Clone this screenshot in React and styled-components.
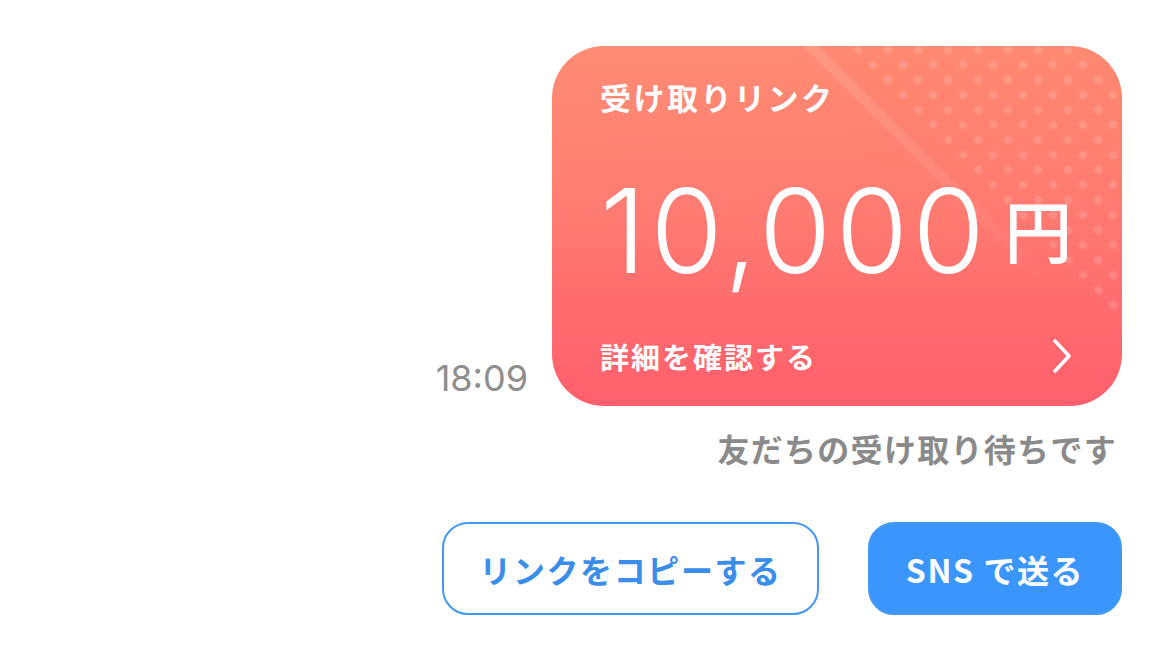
import React from 'react';
import styled, { createGlobalStyle } from 'styled-components';

const GlobalStyle = createGlobalStyle`
  html, body {
    margin: 0;
    padding: 0;
    background: #ffffff;
  }
  body {
    font-family: "Noto Sans CJK JP", "Noto Sans", sans-serif;
  }
`;

const Page = styled.div`
  display: flex;
  flex-direction: column;
  align-items: flex-end;
  padding: 46px 48px 0 0;
`;

const MessageRow = styled.div`
  display: flex;
  align-items: flex-end;
  gap: 24px;
`;

const Time = styled.span`
  font-family: Inter, "Noto Sans", sans-serif;
  font-size: 36px;
  line-height: 1;
  color: #8e8e8e;
  margin-bottom: 10px;
`;

const Card = styled.div`
  position: relative;
  overflow: hidden;
  width: 570px;
  height: 360px;
  box-sizing: border-box;
  padding: 30px 48px 0 48px;
  border-radius: 52px;
  background: linear-gradient(180deg, #ff8970 0%, #ff7a70 45%, #ff5f6d 100%);
  color: #ffffff;
  display: flex;
  flex-direction: column;
`;

const Decoration = styled.svg`
  position: absolute;
  inset: 0;
  pointer-events: none;
`;

const CardTitle = styled.div`
  position: relative;
  font-size: 31px;
  font-weight: 700;
  line-height: 42px;
  letter-spacing: 2.5px;
`;

const Amount = styled.div`
  position: relative;
  display: flex;
  align-items: flex-end;
  margin-top: 54px;
  height: 117px;
`;

const Digits = styled.span`
  font-family: Inter, "Noto Sans", sans-serif;
  font-weight: 300;
  font-size: 117px;
  line-height: 1;
  letter-spacing: 4.5px;
`;

const Yen = styled.span`
  font-size: 68px;
  font-weight: 500;
  line-height: 1;
  margin-left: 15px;
  margin-bottom: 26px;
`;

const DetailRow = styled.div`
  position: relative;
  display: flex;
  align-items: center;
  justify-content: space-between;
  margin-top: 47px;
  height: 40px;
`;

const DetailText = styled.span`
  font-size: 29px;
  font-weight: 700;
  letter-spacing: 2px;
`;

const Status = styled.div`
  margin-top: 20px;
  padding-right: 5px;
  font-size: 32px;
  font-weight: 700;
  color: #8a8a8a;
  line-height: 44px;
  letter-spacing: 1.3px;
`;

const Actions = styled.div`
  display: flex;
  gap: 49px;
  margin-top: 52px;
`;

const ActionButton = styled.button`
  box-sizing: border-box;
  height: 93px;
  width: ${p => p.$w}px;
  border-radius: 26px;
  border: 2.5px solid #4398f5;
  background: ${p => (p.$filled ? '#3a96fc' : '#ffffff')};
  color: ${p => (p.$filled ? '#ffffff' : '#3a8eea')};
  font-family: "Noto Sans CJK JP", "Noto Sans", sans-serif;
  font-size: 32px;
  font-weight: 700;
  letter-spacing: 1.6px;
  display: flex;
  align-items: center;
  justify-content: center;
  padding: 0;
`;

function CardDecoration() {
  return (
    <Decoration width="570" height="360" viewBox="0 0 570 360">
      <defs>
        <pattern id="dots" x="-1.5" y="-3.5" width="30" height="30" patternUnits="userSpaceOnUse">
          <circle cx="7.5" cy="7.5" r="4.2" fill="#ffffff" />
          <circle cx="22.5" cy="22.5" r="4.2" fill="#ffffff" />
        </pattern>
        <linearGradient id="streak" x1="0" y1="0" x2="1" y2="1">
          <stop offset="0" stopColor="#ffffff" stopOpacity="0.12" />
          <stop offset="0.7" stopColor="#ffffff" stopOpacity="0.06" />
          <stop offset="1" stopColor="#ffffff" stopOpacity="0" />
        </linearGradient>
        <linearGradient id="sheen" x1="0" y1="0" x2="1" y2="1">
          <stop offset="0" stopColor="#ffffff" stopOpacity="0.05" />
          <stop offset="1" stopColor="#ffffff" stopOpacity="0" />
        </linearGradient>
      </defs>
      <polygon points="0,0 258,0 460,202 0,202" fill="url(#sheen)" opacity="0.6" />
      <polygon points="251,0 267,0 500,233 484,233" fill="url(#streak)" />
      <polygon points="297,0 570,0 570,273" fill="url(#dots)" opacity="0.14" />
    </Decoration>
  );
}

function Chevron() {
  return (
    <svg width="24" height="36" viewBox="0 0 24 36" fill="none">
      <path d="M5 3 L19 18 L5 33" stroke="#ffffff" strokeWidth="3.6" strokeLinecap="round" strokeLinejoin="round" />
    </svg>
  );
}

export default function App() {
  return (
    <>
      <GlobalStyle />
      <Page>
        <MessageRow>
          <Time>18:09</Time>
          <Card>
            <CardDecoration />
            <CardTitle>受け取りリンク</CardTitle>
            <Amount>
              <Digits>10,000</Digits>
              <Yen>円</Yen>
            </Amount>
            <DetailRow>
              <DetailText>詳細を確認する</DetailText>
              <Chevron />
            </DetailRow>
          </Card>
        </MessageRow>
        <Status>友だちの受け取り待ちです</Status>
        <Actions>
          <ActionButton $w={377}>リンクをコピーする</ActionButton>
          <ActionButton $w={254} $filled>SNS で送る</ActionButton>
        </Actions>
      </Page>
    </>
  );
}
